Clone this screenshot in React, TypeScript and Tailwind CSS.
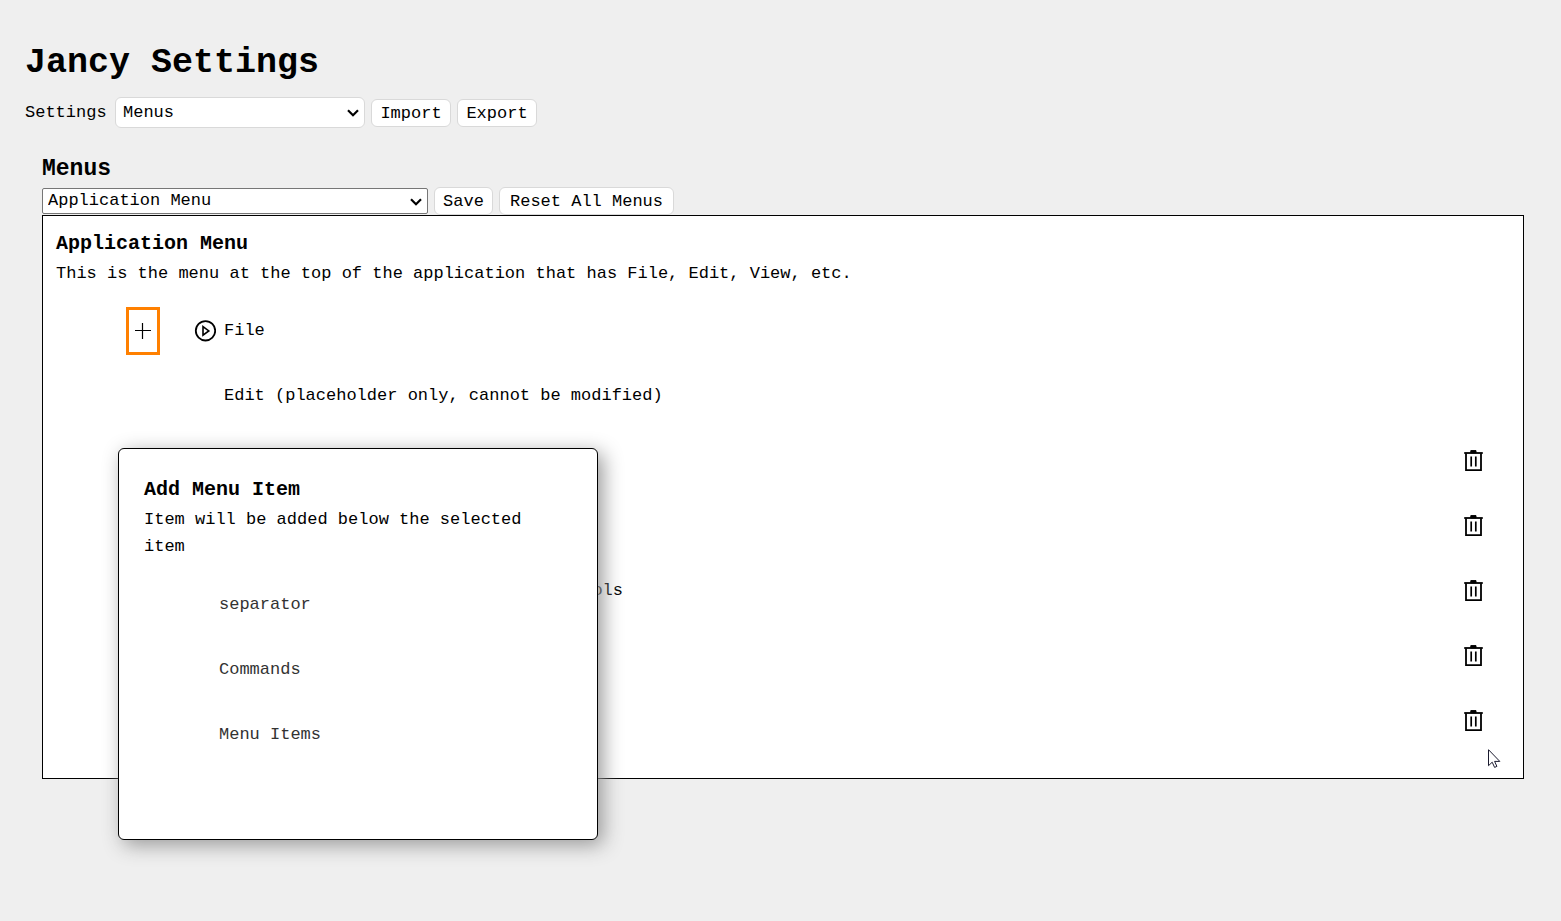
type MenuEntry = {
  id: string;
  label?: string;
  expandable?: boolean;
  selected?: boolean;
  removable?: boolean;
  alignEnd?: boolean;
};

const ENTRIES: MenuEntry[] = [
  { id: 'file', label: 'File', expandable: true, selected: true },
  { id: 'edit', label: 'Edit (placeholder only, cannot be modified)' },
  { id: 'view', removable: true },
  { id: 'favorites', removable: true },
  { id: 'tools', label: 'Tools', removable: true, alignEnd: true },
  { id: 'window', removable: true },
  { id: 'help', removable: true },
];

const NEW_ITEMS = ['separator', 'Commands', 'Menu Items'];

function PlusIcon() {
  return (
    <svg width="16" height="16" viewBox="0 0 16 16" stroke="currentColor" strokeWidth="1.2" aria-hidden="true">
      <path d="M7.5 0v16M0 7.5h16" />
    </svg>
  );
}

function PlayIcon() {
  return (
    <svg width="22" height="22" viewBox="0 0 22 22" fill="none" stroke="currentColor" aria-hidden="true">
      <circle cx="11.5" cy="10.8" r="9.7" strokeWidth="1.8" />
      <path d="M9 6.6v8.6l5.8-4.3z" strokeWidth="1.6" />
    </svg>
  );
}

function TrashIcon() {
  return (
    <svg width="19" height="22" viewBox="0 0 19 22" fill="none" stroke="currentColor" aria-hidden="true">
      <path d="M6.8 0.6h5.2v2.2h-5.2z" fill="currentColor" strokeWidth="1" />
      <path d="M0.2 3h18.6" strokeWidth="1.8" />
      <path d="M2 3.2v17h15v-17" strokeWidth="1.8" />
      <path d="M7.2 6.4v10M11.8 6.4v10" strokeWidth="1.7" />
    </svg>
  );
}

function Pointer() {
  return (
    <svg
      className="pointer-events-none absolute right-[22px] bottom-[9px]"
      width="13"
      height="20"
      viewBox="0 0 13 20"
      fill="#fff"
      stroke="#1a1a2e"
      strokeWidth="1"
      aria-hidden="true"
    >
      <path d="M0.5 0.7v16l3.7-3.5 2.4 5.2 2.3-1-2.3-5h5.2z" />
    </svg>
  );
}

function Chevron({ className }: { className: string }) {
  return (
    <svg className={className} width="12" height="8" viewBox="0 0 12 8" fill="none" stroke="#000" strokeWidth="2.2" aria-hidden="true">
      <path d="M1 1.2l5 5 5-5" />
    </svg>
  );
}

function PlainButton({ children, className }: { children: string; className: string }) {
  return (
    <button
      type="button"
      className={`flex h-7 items-center justify-center rounded-md border border-[#d9d9d9] bg-white pt-0.5 leading-6 whitespace-nowrap ${className}`}
    >
      {children}
    </button>
  );
}

/** Dialog listing what can be inserted under the selected entry. */
function AddMenuItemDialog() {
  return (
    <div
      role="dialog"
      aria-labelledby="add-item-title"
      className="absolute top-[232px] left-[75px] h-[392px] w-[480px] rounded-md border border-black bg-white py-[25px] pr-10 pl-[25px] shadow-[5px_5px_20px_#999]"
    >
      <h3 id="add-item-title" className="text-[20px] leading-8 font-bold">
        Add Menu Item
      </h3>
      <p className="leading-[27px]">Item will be added below the selected item</p>
      <ul className="mt-3 pl-[75px] text-[#333]">
        {NEW_ITEMS.map((item) => (
          <li key={item} className="flex h-[65px] items-center">
            <button type="button">{item}</button>
          </li>
        ))}
      </ul>
    </div>
  );
}

function EntryRow({ entry }: { entry: MenuEntry }) {
  return (
    <li className="flex h-[65px] items-center pr-[27px] pl-[70px]">
      <div className="w-[68px]">
        {entry.selected ? (
          <button
            type="button"
            aria-label="Add menu item"
            className="flex h-12 w-[34px] items-center justify-center border-3 border-[#ff8000]"
          >
            <PlusIcon />
          </button>
        ) : null}
      </div>
      <div className="w-[30px]">
        {entry.expandable ? (
          <button type="button" aria-label={`Expand ${entry.id}`} className="block">
            <PlayIcon />
          </button>
        ) : null}
      </div>
      <div className="flex-1">
        {entry.label ? (
          <span className={entry.alignEnd ? 'block w-[399px] text-right' : 'block'}>{entry.label}</span>
        ) : null}
      </div>
      {entry.removable ? (
        <button type="button" aria-label={`Delete ${entry.id}`}>
          <TrashIcon />
        </button>
      ) : null}
    </li>
  );
}

export default function App() {
  return (
    <main className="min-h-screen bg-[#efefef] pt-9 pr-[37px] pb-16 pl-[25px] font-['Liberation_Mono',monospace] text-[17px] leading-[27px] text-black">
      <h1 className="text-[35px] leading-[54px] font-bold">Jancy Settings</h1>

      <div className="mt-[7px] flex items-center gap-1.5">
        <label htmlFor="settings-page" className="w-[84px]">
          Settings
        </label>
        <div className="relative w-[250px]">
          <select
            id="settings-page"
            className="block h-[31px] w-full appearance-none rounded-md border border-[#d9d9d9] bg-white pr-6 pl-[7px]"
          >
            <option>Menus</option>
          </select>
          <Chevron className="pointer-events-none absolute top-3 right-[6px]" />
        </div>
        <PlainButton className="w-20">Import</PlainButton>
        <PlainButton className="w-20">Export</PlainButton>
      </div>

      <section className="mt-[23px] pl-[17px]">
        <h2 className="text-[23px] leading-9 font-bold">Menus</h2>
        <div className="flex items-center gap-1.5">
          <div className="relative w-[386px]">
            <select
              aria-label="Menu"
              className="block h-[26px] w-full appearance-none rounded-xs border border-[#767676] bg-white pr-6 pl-[5px] leading-6"
            >
              <option>Application Menu</option>
            </select>
            <Chevron className="pointer-events-none absolute top-[10px] right-[6px]" />
          </div>
          <PlainButton className="w-[59px]">Save</PlainButton>
          <PlainButton className="w-[175px]">Reset All Menus</PlainButton>
        </div>

        <div className="relative border border-black bg-white px-[13px] pt-3 pb-[25px]">
          <h3 className="text-[20px] leading-8 font-bold">Application Menu</h3>
          <p className="leading-[27px]">
            This is the menu at the top of the application that has File, Edit, View, etc.
          </p>
          <ul className="mt-[11px]">
            {ENTRIES.map((entry) => (
              <EntryRow key={entry.id} entry={entry} />
            ))}
          </ul>
          <AddMenuItemDialog />
          <Pointer />
        </div>
      </section>
    </main>
  );
}
